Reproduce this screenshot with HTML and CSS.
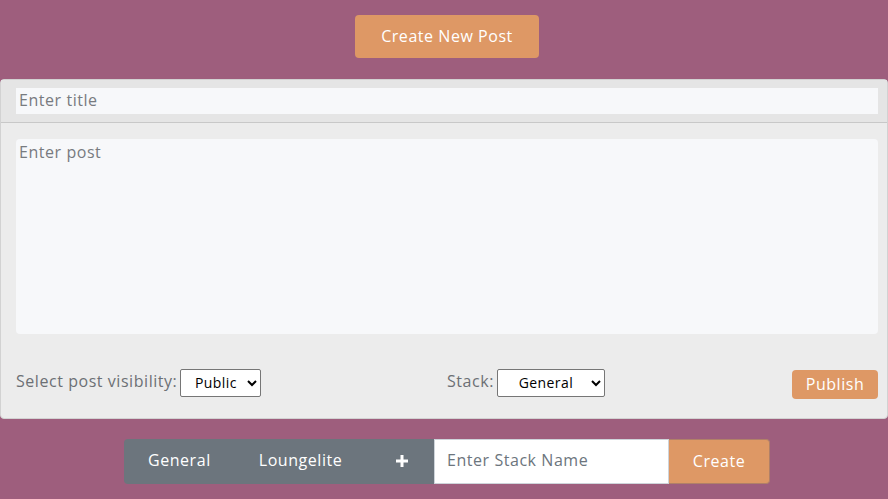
FILE: index.html
```html
<!DOCTYPE html>
<html>
<head>
<meta charset="utf-8">
<link rel="stylesheet" href="styles.css">
</head>
<body>
<div class="top">
  <button class="btn-orange btn-create">Create New Post</button>
</div>
<div class="card">
  <div class="card-header">
    <input class="title-input" type="text" placeholder="Enter title">
  </div>
  <div class="card-body">
    <textarea class="post-input" placeholder="Enter post"></textarea>
    <div class="controls">
      <div class="ctl ctl-vis">
        <label>Select post visibility:</label>
        <select class="sel sel-vis"><option>Public</option></select>
      </div>
      <div class="ctl ctl-stack">
        <label>Stack:</label>
        <select class="sel sel-stack"><option>General</option></select>
      </div>
      <button class="btn-orange btn-publish">Publish</button>
    </div>
  </div>
</div>
<div class="bottom">
  <div class="stackbar">
    <div class="tabs">
      <span class="tab">General</span>
      <span class="tab">Loungelite</span>
      <span class="tab tab-plus">
        <svg width="14" height="14" viewBox="0 0 14 14"><path d="M7 1v12M1 7h12" stroke="#fff" stroke-width="3"/></svg>
      </span>
    </div>
    <input class="stack-input" type="text" placeholder="Enter Stack Name">
    <button class="btn-orange btn-stack">Create</button>
  </div>
</div>
</body>
</html>
```

FILE: styles.css
```css
* { box-sizing: border-box; }
html, body { margin: 0; padding: 0; }
body {
  background: #9e5e7d;
  font-family: "Open Sans", "Liberation Sans", sans-serif;
  letter-spacing: 0.55px;
  width: 888px;
  height: 499px;
  overflow: hidden;
}
button, input, textarea, select { font-family: inherit; letter-spacing: inherit; }
.top {
  display: flex;
  justify-content: center;
  padding-top: 15px;
  height: 79px;
}
.btn-orange {
  background: #de9865;
  color: #fff;
  border: none;
  border-radius: 4px;
  padding-bottom: 3px;
}
.btn-create {
  width: 184px;
  height: 43px;
  font-size: 16px;
  margin-left: 6px;
}
.card {
  background: #ececec;
  border: 1px solid #d2d2d2;
  border-radius: 4px;
  height: 340px;
}
.card-header {
  background: #e5e5e5;
  border-bottom: 1px solid #c8c8c8;
  padding: 8px 9px 7px 15px;
  height: 43px;
}
.title-input {
  width: 100%;
  height: 26px;
  border: none;
  background: #f7f8fa;
  font-size: 16px;
  padding: 0 3px 2px;
  color: #495057;
}
.title-input::placeholder, .post-input::placeholder { color: #777b80; }
.card-body {
  padding: 16px 9px 0 15px;
}
.post-input {
  display: block;
  width: 100%;
  height: 195px;
  border: none;
  border-radius: 4px;
  background: #f7f8fa;
  font-size: 16px;
  padding: 2px 3px;
  resize: none;
}
.controls {
  display: flex;
  align-items: center;
  margin-top: 34px;
  height: 29px;
}
.ctl {
  display: flex;
  align-items: center;
  color: #6c7075;
  font-size: 16px;
}
.ctl label { margin-right: 3px; padding-bottom: 3px; }
.ctl-vis { width: 431px; }
.sel {
  height: 28px;
  font-size: 14px;
  border: 1px solid #767676;
  border-radius: 2px;
  background: #fff;
  color: #000;
  text-align-last: center;
  letter-spacing: 0.4px;
  padding-left: 2px;
}
.sel-vis { width: 81px; }
.sel-stack { width: 108px; }
.btn-publish {
  margin-left: auto;
  width: 86px;
  height: 29px;
  font-size: 16px;
  margin-top: 4px;
}
.bottom {
  display: flex;
  justify-content: center;
  padding-top: 20px;
}
.stackbar {
  display: flex;
  height: 45px;
  margin-left: 6px;
}
.tabs {
  display: flex;
  background: #6c757d;
  border-radius: 4px 0 0 4px;
  width: 310px;
}
.tab {
  display: flex;
  align-items: center;
  color: #fff;
  font-size: 16px;
  padding: 0 24px 3px;
}
.tab-plus { margin-left: auto; padding: 0 25px 2px; }
.stack-input {
  width: 235px;
  height: 45px;
  border: 1px solid #ced4da;
  background: #fff;
  font-size: 16px;
  padding: 0 12px 3px;
}
.stack-input::placeholder { color: #6c757d; }
.btn-stack {
  width: 101px;
  height: 45px;
  font-size: 16px;
  border-radius: 0 4px 4px 0;
  border: 1px solid #b08068;
  border-left: none;
  padding-bottom: 3px;
}
```
